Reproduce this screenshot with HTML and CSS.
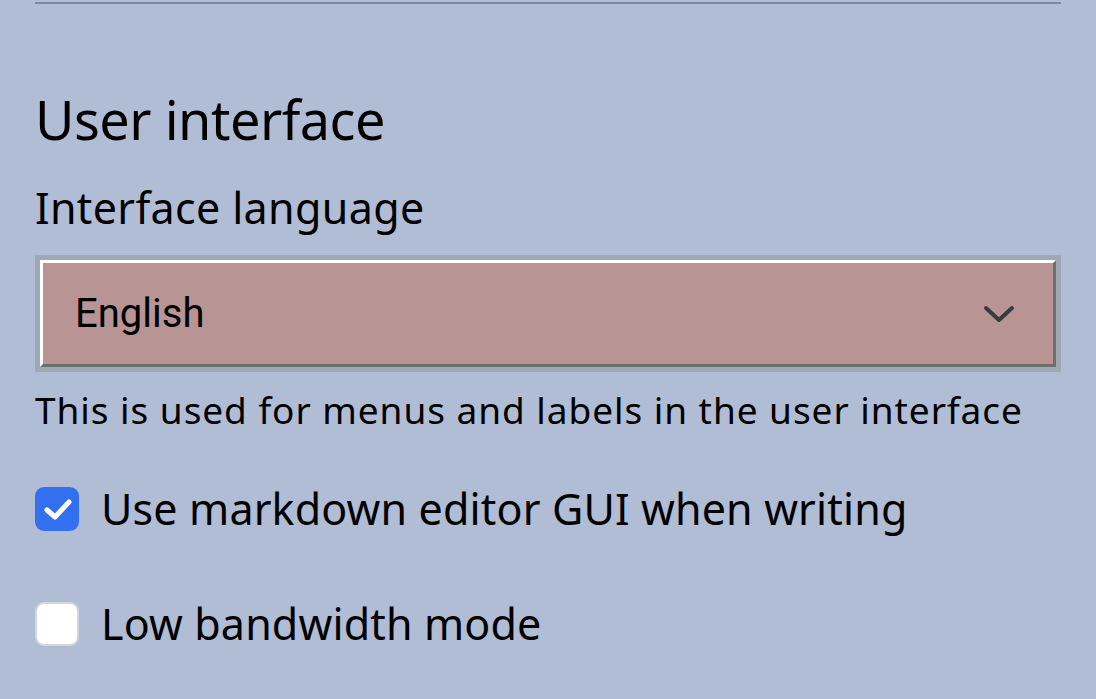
FILE: index.html
```html
<!DOCTYPE html>
<html lang="en">
<head>
<meta charset="utf-8">
<title>User interface settings</title>
<link rel="stylesheet" href="styles.css">
</head>
<body>
<main class="page">
  <hr class="divider">
  <section class="section">
    <h2 class="section-title">User interface</h2>
    <label class="field-label" for="lang">Interface language</label>
    <div class="select-frame">
      <div class="select" id="lang">
        <span class="select-value">English</span>
        <svg class="chevron" viewBox="0 0 32 18" width="32" height="18" aria-hidden="true">
          <polyline points="3,3 16,15 29,3" fill="none" stroke="#353b41" stroke-width="4" stroke-linecap="round" stroke-linejoin="round"/>
        </svg>
      </div>
    </div>
    <p class="help">This is used for menus and labels in the user interface</p>
    <div class="check-row">
      <span class="box box-checked">
        <svg viewBox="0 0 44 44" width="44" height="44" aria-hidden="true">
          <polyline points="12,23 20,30 34,15" fill="none" stroke="#ffffff" stroke-width="5" stroke-linecap="round" stroke-linejoin="round"/>
        </svg>
      </span>
      <span class="check-label">Use markdown editor GUI when writing</span>
    </div>
    <div class="check-row">
      <span class="box box-empty"></span>
      <span class="check-label">Low bandwidth mode</span>
    </div>
  </section>
</main>
</body>
</html>
```
FILE: styles.css
```css
html, body {
  margin: 0;
  padding: 0;
  background: #b0bdd5;
}
body {
  font-family: "Noto Sans", "DejaVu Sans", sans-serif;
  color: #000;
  overflow: hidden;
}
.page {
  padding: 0 35px;
}
.divider {
  margin: 2px 0 0 0;
  border: 0;
  height: 2px;
  background: #7c889c;
}
.section {
  display: flex;
  flex-direction: column;
}
.section-title {
  margin: 80px 0 0 0;
  font-size: 54px;
  font-weight: 400;
  line-height: 70px;
  letter-spacing: -0.5px;
}
.field-label {
  margin-top: 29px;
  font-size: 43px;
  line-height: 50px;
  letter-spacing: 0.35px;
}
.select-frame {
  margin-top: 22px;
  background: #9fa8b5;
  padding: 5px;
}
.select {
  height: 107px;
  box-sizing: border-box;
  border: 3px solid;
  border-color: #ffffff #6e6e6e #6e6e6e #ffffff;
  background: #b89494;
  display: flex;
  align-items: center;
  justify-content: space-between;
  padding: 0 38px 0 32px;
}
.select-value {
  font-family: Roboto, "Noto Sans", sans-serif;
  font-size: 40px;
}
.chevron {
  display: block;
}
.help {
  margin: 15px 0 0 0;
  font-size: 37px;
  line-height: 46px;
  letter-spacing: 0.95px;
}
.check-row {
  display: flex;
  align-items: center;
  gap: 22px;
  margin-top: 51px;
}
.check-row + .check-row {
  margin-top: 65px;
}
.box {
  flex: none;
  width: 44px;
  height: 44px;
  box-sizing: border-box;
  border-radius: 9px;
}
.box svg {
  display: block;
}
.box-checked {
  background: #3370f0;
}
.box-empty {
  background: #ffffff;
  border: 2px solid #d3d6dc;
}
.check-label {
  font-size: 43px;
  line-height: 50px;
  letter-spacing: 0.15px;
}
```
